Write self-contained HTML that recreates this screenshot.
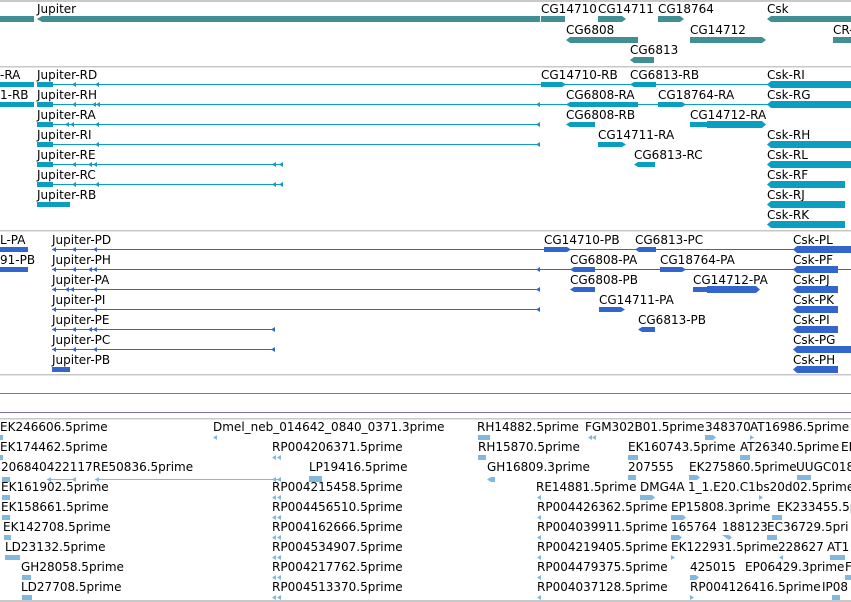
<!DOCTYPE html>
<html><head><meta charset="utf-8"><style>
html,body{margin:0;padding:0;background:#fff;overflow:hidden}
svg{display:block}
text{font-family:"DejaVu Sans","Liberation Sans",sans-serif;font-size:12px;fill:#000}
</style></head><body>
<svg width="851" height="602" xmlns="http://www.w3.org/2000/svg">
<!-- separators -->
<g fill="#c8c8c8">
<rect x="0" y="0" width="851" height="2"/>
<rect x="0" y="66" width="851" height="1.5"/>
<rect x="0" y="230" width="851" height="1.5"/>
<rect x="0" y="374" width="851" height="1.5"/>
<rect x="0" y="418" width="851" height="1.5"/>
<rect x="0" y="600" width="851" height="2"/>
</g>
<rect x="0" y="393" width="851" height="1" fill="#8070b0"/>
<rect x="0" y="412" width="851" height="1" fill="#8070b0"/>

<!-- GENES -->
<g>
<text x="37" y="13">Jupiter</text>
<text x="541" y="13">CG14710</text><text x="598" y="13">CG14711</text><text x="658" y="13">CG18764</text><text x="767" y="13">Csk</text>
<text x="566" y="34">CG6808</text><text x="690" y="34">CG14712</text><text x="833" y="34">CR-</text>
<text x="630" y="54">CG6813</text>
</g>
<g fill="#3f8f94">
<rect x="0" y="16" width="34" height="6"/>
<polygon points="37,19 42,16 540,16 540,22 42,22"/>
<rect x="541" y="16" width="24" height="6"/>
<polygon points="598,16 622,16 626,19 622,22 598,22"/>
<polygon points="658,16 680,16 684,19 680,22 658,22"/>
<polygon points="767,19 771,16 851,16 851,22 771,22"/>
<polygon points="566,40 570,37 638,37 638,43 570,43"/>
<polygon points="690,37 762,37 766,40 762,43 690,43"/>
<rect x="833" y="37" width="18" height="6"/>
<polygon points="630,60 634,57 654,57 654,63 634,63"/>
</g>

<!-- TRANSCRIPTS -->
<g>
<text x="0" y="79">-RA</text><text x="0" y="99">1-RB</text>
<text x="37" y="79">Jupiter-RD</text><text x="37" y="99">Jupiter-RH</text><text x="37" y="119">Jupiter-RA</text><text x="37" y="139">Jupiter-RI</text>
<text x="37" y="159">Jupiter-RE</text><text x="37" y="179">Jupiter-RC</text><text x="37" y="199">Jupiter-RB</text>
<text x="541" y="79">CG14710-RB</text><text x="630" y="79">CG6813-RB</text>
<text x="566" y="99">CG6808-RA</text><text x="658" y="99">CG18764-RA</text>
<text x="566" y="119">CG6808-RB</text><text x="690" y="119">CG14712-RA</text>
<text x="598" y="139">CG14711-RA</text>
<text x="634" y="159">CG6813-RC</text>
<text x="767" y="79">Csk-RI</text><text x="767" y="99">Csk-RG</text><text x="767" y="139">Csk-RH</text><text x="767" y="159">Csk-RL</text>
<text x="767" y="179">Csk-RF</text><text x="767" y="199">Csk-RJ</text><text x="767" y="219">Csk-RK</text>
</g>
<g fill="#0a9fc0">
<!-- left partial -->
<rect x="0" y="82" width="34" height="5"/><rect x="0" y="102" width="34" height="5"/>
<!-- Jupiter lines -->
<rect x="37" y="84" width="814" height="1"/><rect x="37" y="104" width="814" height="1"/>
<rect x="37" y="124" width="503" height="1"/><rect x="37" y="144" width="503" height="1"/>
<rect x="37" y="164" width="246" height="1"/><rect x="37" y="184" width="246" height="1"/>
<rect x="37" y="82" width="16" height="5"/><rect x="37" y="102" width="16" height="5"/><rect x="37" y="122" width="16" height="5"/>
<rect x="37" y="142" width="16" height="5"/><rect x="37" y="162" width="16" height="5"/><rect x="37" y="182" width="16" height="5"/>
<rect x="37" y="202" width="33" height="5"/>
<polygon points="72,84.5 76,82 76,87"/><polygon points="95,84.5 99,82 99,87"/>
<polygon points="72,104.5 76,102 76,107"/><polygon points="92,104.5 96,102 96,107"/><polygon points="96,104.5 100,102 100,107"/>
<polygon points="65,124.5 69,122 69,127"/><polygon points="70,124.5 74,122 74,127"/><polygon points="95,124.5 99,122 99,127"/>
<polygon points="95,144.5 99,142 99,147"/>
<polygon points="72,164.5 76,162 76,167"/><polygon points="88,164.5 92,162 92,167"/><polygon points="93,164.5 97,162 97,167"/><polygon points="272,164.5 276,162 276,167"/><polygon points="279,164.5 283,162 283,167"/>
<polygon points="72,184.5 76,182 76,187"/><polygon points="95,184.5 99,182 99,187"/><polygon points="272,184.5 276,182 276,187"/><polygon points="279,184.5 283,182 283,187"/>
<!-- right side -->
<polygon points="536,104.5 540,102 540,107"/><polygon points="536,124.5 540,122 540,127"/><polygon points="536,144.5 540,142 540,147"/>
<rect x="530" y="84" width="12" height="1"/>
<polygon points="541,82 562,82 566,84.5 562,87 541,87"/>
<polygon points="630,84.5 634,82 656,82 656,87 634,87"/>
<polygon points="566,104.5 570,102 638,102 638,107 570,107"/>
<polygon points="658,102 682,102 686,104.5 682,107 658,107"/>
<polygon points="566,124.5 570,122 595,122 595,127 570,127"/>
<rect x="690" y="122" width="17" height="5"/><polygon points="707,121 762,121 766,124.5 762,128 707,128"/>
<polygon points="598,142 622,142 626,144.5 622,147 598,147"/>
<polygon points="634,164.5 638,162 655,162 655,167 638,167"/>
<polygon points="767,84.5 771,81 851,81 851,88 771,88"/>
<polygon points="767,104.5 771,101 851,101 851,108 771,108"/>
<polygon points="767,144.5 771,141 851,141 851,148 771,148"/>
<polygon points="767,164.5 771,161 851,161 851,168 771,168"/>
<polygon points="767,184.5 771,181 845,181 845,188 771,188"/>
<polygon points="767,204.5 771,201 845,201 845,208 771,208"/>
<polygon points="767,224.5 771,221 845,221 845,228 771,228"/>
</g>

<!-- PROTEINS -->
<g>
<text x="0" y="244">L-PA</text><text x="0" y="264">91-PB</text>
<text x="52" y="244">Jupiter-PD</text><text x="52" y="264">Jupiter-PH</text><text x="52" y="284">Jupiter-PA</text><text x="52" y="304">Jupiter-PI</text>
<text x="52" y="324">Jupiter-PE</text><text x="52" y="344">Jupiter-PC</text><text x="52" y="364">Jupiter-PB</text>
<text x="544" y="244">CG14710-PB</text><text x="635" y="244">CG6813-PC</text>
<text x="570" y="264">CG6808-PA</text><text x="660" y="264">CG18764-PA</text>
<text x="570" y="284">CG6808-PB</text><text x="693" y="284">CG14712-PA</text>
<text x="599" y="304">CG14711-PA</text>
<text x="638" y="324">CG6813-PB</text>
<text x="793" y="244">Csk-PL</text><text x="793" y="264">Csk-PF</text><text x="793" y="284">Csk-PJ</text><text x="793" y="304">Csk-PK</text>
<text x="793" y="324">Csk-PI</text><text x="793" y="344">Csk-PG</text><text x="793" y="364">Csk-PH</text>
</g>
<g fill="#3366cc">
<rect x="0" y="247" width="28" height="5"/><rect x="0" y="267" width="28" height="5"/>
<rect x="52" y="249" width="799" height="1"/><rect x="52" y="269" width="799" height="1"/>
<rect x="52" y="289" width="488" height="1"/><rect x="52" y="309" width="488" height="1"/>
<rect x="52" y="329" width="223" height="1"/><rect x="52" y="349" width="223" height="1"/>
<polygon points="52,249.5 56,247 56,252"/><polygon points="72,249.5 76,247 76,252"/><polygon points="93,249.5 97,247 97,252"/>
<polygon points="52,269.5 56,267 56,272"/><polygon points="72,269.5 76,267 76,272"/><polygon points="88,269.5 92,267 92,272"/><polygon points="93,269.5 97,267 97,272"/>
<polygon points="52,289.5 56,287 56,292"/><polygon points="65,289.5 69,287 69,292"/><polygon points="70,289.5 74,287 74,292"/><polygon points="93,289.5 97,287 97,292"/>
<polygon points="52,309.5 56,307 56,312"/><polygon points="93,309.5 97,307 97,312"/>
<polygon points="52,329.5 56,327 56,332"/><polygon points="72,329.5 76,327 76,332"/><polygon points="88,329.5 92,327 92,332"/><polygon points="93,329.5 97,327 97,332"/><polygon points="271,329.5 275,327 275,332"/>
<polygon points="52,349.5 56,347 56,352"/><polygon points="72,349.5 76,347 76,352"/><polygon points="93,349.5 97,347 97,352"/><polygon points="271,349.5 275,347 275,352"/>
<rect x="52" y="367" width="18" height="5"/>
<rect x="530" y="249" width="12" height="1"/>
<polygon points="536,269.5 540,267 540,272"/><polygon points="536,289.5 540,287 540,292"/><polygon points="536,309.5 540,307 540,312"/>
<rect x="530" y="269" width="10" height="1"/><rect x="530" y="289" width="10" height="1"/><rect x="530" y="309" width="10" height="1"/>
<polygon points="544,247 567,247 571,249.5 567,252 544,252"/>
<polygon points="635,249.5 639,247 656,247 656,252 639,252"/>
<polygon points="570,269.5 574,267 595,267 595,272 574,272"/>
<polygon points="660,267 682,267 686,269.5 682,272 660,272"/>
<polygon points="570,289.5 574,287 595,287 595,292 574,292"/>
<rect x="693" y="287" width="14" height="5"/><polygon points="707,286 756,286 760,289.5 756,293 707,293"/>
<polygon points="599,307 621,307 625,309.5 621,312 599,312"/>
<polygon points="638,329.5 642,327 655,327 655,332 642,332"/>
<polygon points="793,249.5 797,246 851,246 851,253 797,253"/>
<polygon points="793,269.5 797,266 838,266 838,273 797,273"/>
<polygon points="793,289.5 797,286 838,286 838,293 797,293"/>
<polygon points="793,309.5 797,306 838,306 838,313 797,313"/>
<polygon points="793,329.5 797,326 838,326 838,333 797,333"/>
<polygon points="793,349.5 797,346 851,346 851,353 797,353"/>
<polygon points="793,369.5 797,366 838,366 838,373 797,373"/>
</g>

<!-- ESTs -->
<g>
<text x="0" y="431">EK246606.5prime</text><text x="213" y="431">Dmel_neb_014642_0840_0371.3prime</text>
<text x="477" y="431">RH14882.5prime</text><text x="585" y="431">FGM302B01.5prime</text><text x="705" y="431">348370</text><text x="750" y="431">AT16986.5prime</text>
<text x="0" y="451">EK174462.5prime</text><text x="272" y="451">RP004206371.5prime</text><text x="478" y="451">RH15870.5prime</text>
<text x="628" y="451">EK160743.5prime</text><text x="740" y="451">AT26340.5prime</text><text x="841" y="451">EK</text>
<text x="1" y="471">206840422117RE50836.5prime</text><text x="309" y="471">LP19416.5prime</text><text x="487" y="471">GH16809.3prime</text>
<text x="628" y="471">207555</text><text x="689" y="471">EK275860.5prime</text><text x="796" y="471">UUGC018</text>
<text x="1" y="491">EK161902.5prime</text><text x="272" y="491">RP004215458.5prime</text><text x="536" y="491">RE14881.5prime</text>
<text x="640" y="491">DMG4A</text><text x="688" y="491">1_1.E20.C1bs20d02.5prime</text>
<text x="1" y="511">EK158661.5prime</text><text x="272" y="511">RP004456510.5prime</text><text x="537" y="511">RP004426362.5prime</text>
<text x="671" y="511">EP15808.3prime</text><text x="777" y="511">EK233455.5p</text>
<text x="3" y="531">EK142708.5prime</text><text x="272" y="531">RP004162666.5prime</text><text x="537" y="531">RP004039911.5prime</text>
<text x="671" y="531">165764</text><text x="722" y="531">188123</text><text x="767" y="531">EC36729.5pri</text>
<text x="5" y="551">LD23132.5prime</text><text x="272" y="551">RP004534907.5prime</text><text x="537" y="551">RP004219405.5prime</text>
<text x="671" y="551">EK122931.5prime</text><text x="778" y="551">228627</text><text x="827" y="551">AT1</text>
<text x="21" y="571">GH28058.5prime</text><text x="272" y="571">RP004217762.5prime</text><text x="537" y="571">RP004479375.5prime</text>
<text x="690" y="571">425015</text><text x="745" y="571">EP06429.3prime</text><text x="845" y="571">F</text>
<text x="21" y="591">LD27708.5prime</text><text x="272" y="591">RP004513370.5prime</text><text x="537" y="591">RP004037128.5prime</text>
<text x="690" y="591">RP004126416.5prime</text><text x="822" y="591">IP08</text>
</g>
<g fill="#80b8e0">
<rect x="0" y="435" width="3" height="5"/><polygon points="213,437.5 217,435 217,440"/>
<rect x="478" y="435" width="12" height="5"/><polygon points="588,437.5 592,435 592,440"/><polygon points="592,437.5 596,435 596,440"/>
<polygon points="705,435 713,435 716,437.5 713,440 705,440"/><polygon points="750,435 754,437.5 750,440"/>
<rect x="0" y="455" width="3" height="5"/><polygon points="272,457.5 276,455 276,460"/><polygon points="277,457.5 281,455 281,460"/>
<rect x="478" y="455" width="8" height="5"/><rect x="628" y="455" width="10" height="5"/><rect x="740" y="455" width="10" height="5"/>
<rect x="2" y="477" width="8" height="5"/><rect x="47" y="479" width="29" height="1"/><polygon points="47,479.5 51,477 51,482"/><polygon points="72,479.5 76,477 76,482"/>
<rect x="95" y="479" width="185" height="1"/><polygon points="95,479.5 99,477 99,482"/><polygon points="272,479.5 276,477 276,482"/><polygon points="277,479.5 281,477 281,482"/>
<rect x="309" y="476" width="13" height="6"/><polygon points="487,479.5 491,477 495,477 495,482 491,482"/>
<rect x="628" y="475" width="8" height="5"/><polygon points="689,475 697,475 700,477.5 697,480 689,480"/><rect x="797" y="475" width="14" height="5"/>
<rect x="2" y="495" width="8" height="5"/><polygon points="272,497.5 276,495 276,500"/><polygon points="277,497.5 281,495 281,500"/>
<polygon points="537,497.5 541,495 541,500"/><polygon points="640,495 652,495 655,497.5 652,500 640,500"/><polygon points="759,495 763,497.5 759,500"/>
<rect x="2" y="515" width="8" height="5"/><polygon points="272,517.5 276,515 276,520"/><polygon points="277,517.5 281,515 281,520"/>
<polygon points="537,517.5 541,515 541,520"/><polygon points="671,515 683,515 686,517.5 683,520 671,520"/><rect x="772" y="515" width="10" height="5"/>
<rect x="4" y="535" width="7" height="5"/><polygon points="272,537.5 276,535 276,540"/><polygon points="277,537.5 281,535 281,540"/>
<polygon points="537,537.5 541,535 541,540"/><polygon points="671,535 679,535 682,537.5 679,540 671,540"/><polygon points="722,535 729,535 732,537.5 729,540"/><rect x="767" y="535" width="10" height="5"/>
<rect x="5" y="555" width="15" height="5"/><polygon points="272,557.5 276,555 276,560"/><polygon points="277,557.5 281,555 281,560"/>
<polygon points="537,557.5 541,555 541,560"/><polygon points="671,555 675,557.5 671,560"/><polygon points="779,557.5 783,555 783,560"/><rect x="830" y="555" width="15" height="5"/>
<rect x="22" y="575" width="9" height="5"/><polygon points="272,577.5 276,575 276,580"/><polygon points="277,577.5 281,575 281,580"/>
<polygon points="537,577.5 541,575 541,580"/><polygon points="690,575 696,575 699,577.5 696,580 690,580"/><rect x="845" y="575" width="6" height="5"/>
<rect x="22" y="595" width="10" height="5"/><polygon points="272,597.5 276,595 276,600"/><polygon points="277,597.5 281,595 281,600"/>
<polygon points="537,597.5 541,595 541,600"/><polygon points="690,595 694,597.5 690,600"/><rect x="832" y="595" width="8" height="5"/>
</g>
</svg>
</body></html>
